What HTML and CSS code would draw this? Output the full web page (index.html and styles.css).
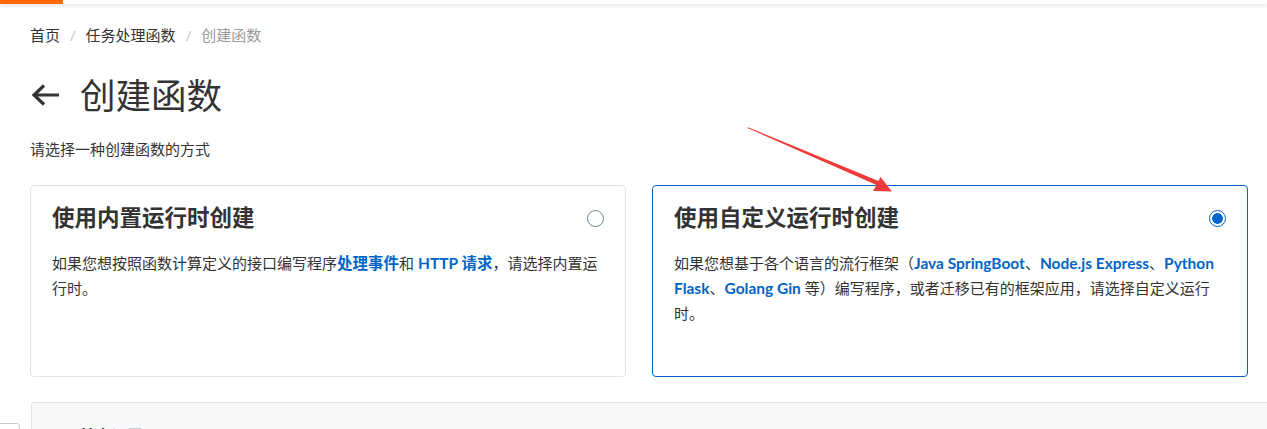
FILE: index.html
```html
<!DOCTYPE html>
<html lang="zh-CN">
<head>
<meta charset="utf-8">
<title>创建函数</title>
<link rel="stylesheet" href="styles.css">
</head>
<body>
<div class="topbar"><div class="topbar-logo"></div></div>
<main class="main">
  <nav class="breadcrumb">
    <a class="crumb">首页</a><span class="sep">/</span><a class="crumb">任务处理函数</a><span class="sep">/</span><span class="crumb current">创建函数</span>
  </nav>
  <div class="title-row">
    <svg class="back" width="30" height="24" viewBox="0 0 30 24"><path d="M28 12H4M13 2.5L3 12l10 9.5" fill="none" stroke="#333" stroke-width="3.2" stroke-linejoin="miter"/></svg>
    <h1 class="title">创建函数</h1>
  </div>
  <p class="subtitle">请选择一种创建函数的方式</p>
  <div class="cards">
    <div class="card">
      <div class="card-head">
        <h2 class="card-title">使用内置运行时创建</h2>
        <span class="radio"></span>
      </div>
      <p class="card-desc">如果您想按照函数计算定义的接口编写程序<b class="link">处理事件</b>和 <b class="link">HTTP 请求</b>，请选择内置运行时。</p>
    </div>
    <div class="card selected">
      <div class="card-head">
        <h2 class="card-title">使用自定义运行时创建</h2>
        <span class="radio checked"></span>
      </div>
      <p class="card-desc">如果您想基于各个语言的流行框架（<b class="link">Java SpringBoot</b>、<b class="link">Node.js Express</b>、<b class="link">Python Flask</b>、<b class="link">Golang Gin</b> 等）编写程序，或者迁移已有的框架应用，请选择自定义运行时。</p>
    </div>
  </div>
  <section class="panel">
    <h3 class="panel-title">基本设置</h3>
  </section>
</main>
<div class="side-toggle"></div>
<svg class="annot" width="1267" height="429" viewBox="0 0 1267 429"><polygon points="747.5,128 876.5,185 873,191 892,191.5 880.5,177 878.5,181 748,127.2" fill="#f03b3b"/></svg>
</body>
</html>
```

FILE: styles.css
```css
* { box-sizing: border-box; }
html, body { margin: 0; padding: 0; }
body {
  width: 1267px;
  height: 429px;
  overflow: hidden;
  background: #fff;
  color: #333;
  font-family: "Noto Sans", "Noto Sans CJK SC", sans-serif;
  font-size: 15px;
  position: relative;
}
.topbar {
  height: 4px;
  background: #fff;
  box-shadow: 0 2px 4px rgba(0,0,0,0.12);
  position: relative;
  z-index: 2;
}
.topbar-logo { width: 63px; height: 4px; background: #ff6a00; }
.main { padding: 21px 0 0 30px; }
.breadcrumb {
  display: flex;
  align-items: center;
  height: 20px;
  line-height: 20px;
  font-size: 15px;
}
.crumb { color: #333; }
.crumb.current { color: #999; }
.sep { color: #ccc; margin: 0 10px; }
.title-row {
  display: flex;
  align-items: center;
  height: 48px;
  margin-top: 26px;
}
.back { margin-left: 1px; margin-right: 19px; }
.title {
  margin: 0;
  font-size: 35.5px;
  font-weight: 400;
  line-height: 48px;
  color: #333;
}
.subtitle {
  margin: 20px 0 0;
  font-size: 15px;
  line-height: 20px;
  color: #333;
}
.cards {
  display: grid;
  grid-template-columns: 596px 596px;
  gap: 26px;
  margin-top: 26px;
}
.card {
  height: 192px;
  border: 1px solid #e3e3e3;
  border-radius: 4px;
  padding: 17px 20px 0 21px;
}
.card.selected { border-color: #0064c8; }
.card-head {
  display: flex;
  align-items: center;
  justify-content: space-between;
  height: 30px;
}
.card-title {
  margin: 0;
  font-size: 22.5px;
  line-height: 30px;
  font-weight: 700;
  color: #333;
}
.radio {
  width: 17px;
  height: 17px;
  border: 1px solid #6f819b;
  border-radius: 50%;
  margin-right: 1px;
  flex: none;
}
.radio.checked {
  border: 1.5px solid #0064c8;
  background: radial-gradient(circle, #0064c8 0 5px, #fff 5.6px);
}
.card-desc {
  margin: 18px 0 0;
  font-size: 15px;
  line-height: 25px;
  color: #333;
}
.link {
  color: #0064c8;
  font-weight: 700;
  font-family: "Lato", "Noto Sans CJK SC", sans-serif;
  font-size: 15.5px;
}
.panel {
  margin-top: 25px;
  margin-left: 1px;
  margin-right: -20px;
  height: 80px;
  background: #f7f8fa;
  border: 1px solid #e3e3e3;
  border-radius: 2px;
  padding: 23px 0 0 47px;
}
.panel-title { margin: 0; font-size: 16px; font-weight: 700; line-height: 20px; }
.side-toggle {
  position: absolute;
  left: -2px;
  top: 423px;
  width: 22px;
  height: 14px;
  border: 1px solid #ccc;
  border-radius: 0 3px 0 0;
  background: #fff;
}
.annot { position: absolute; left: 0; top: 0; pointer-events: none; }
```
